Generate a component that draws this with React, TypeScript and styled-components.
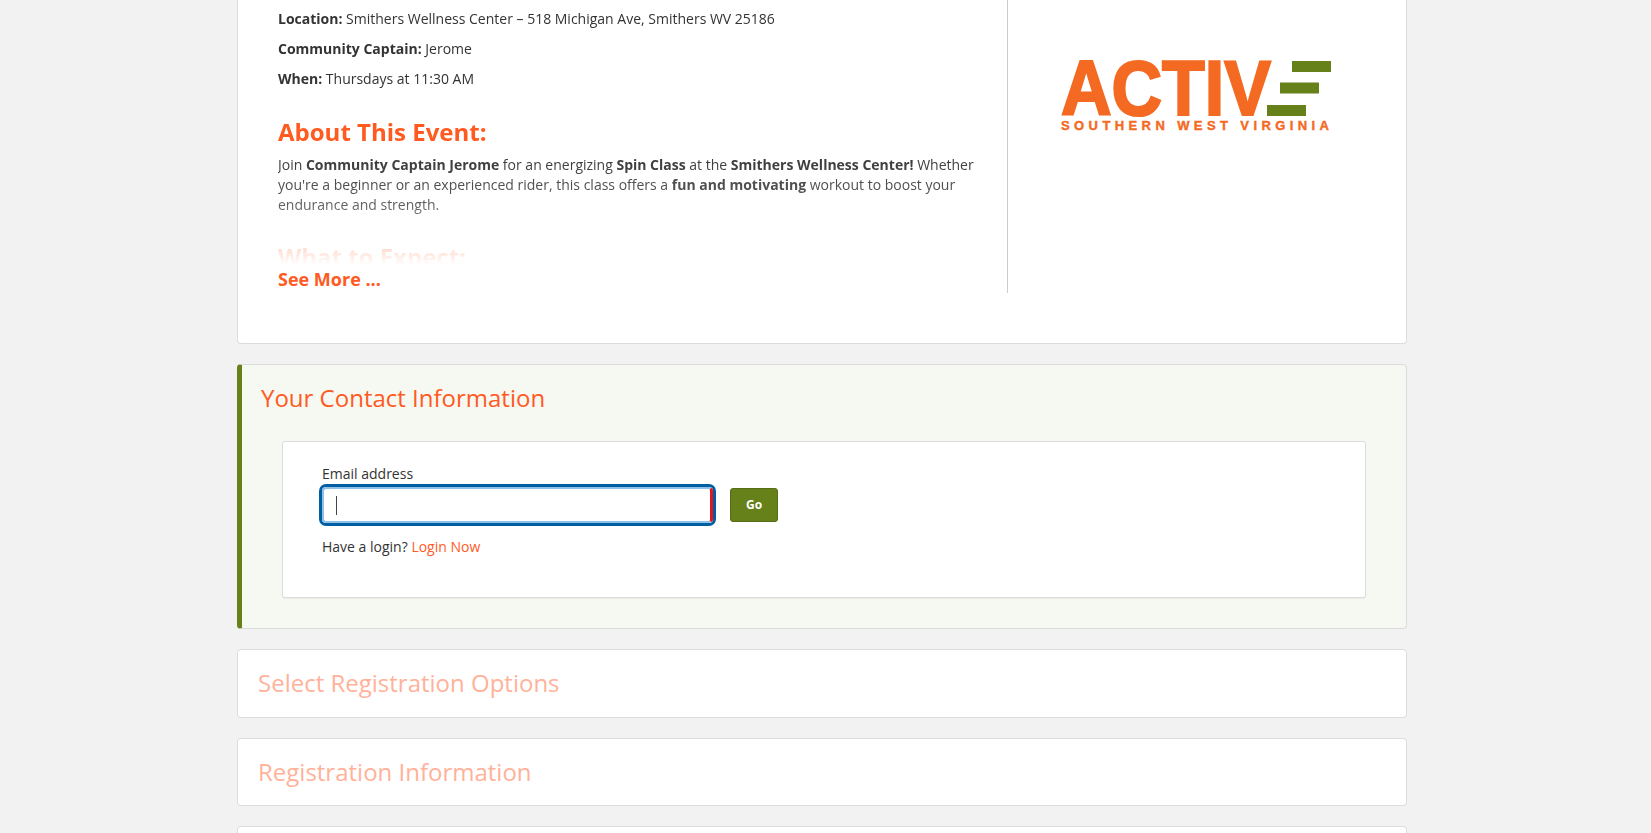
import React from "react";
import styled, { createGlobalStyle } from "styled-components";

const Global = createGlobalStyle`
  html, body { margin: 0; padding: 0; height: 100%; overflow: hidden; background: #f2f2f2; }
  body { font-family: "Open Sans", "Liberation Sans", sans-serif; font-size: 14px; line-height: 20px; color: #333; }
  * { box-sizing: border-box; }
`;

const Page = styled.div`
  width: 1170px;
  margin: 0 0 0 237px;
  display: flex;
  flex-direction: column;
  gap: 20px;
`;

const Card = styled.section`
  background: #fff;
  border: 1px solid #dcdcdc;
  border-radius: 4px;
`;

const EventCard = styled(Card)`
  border-top: 0;
  border-radius: 0 0 4px 4px;
  display: flex;
  padding: 0 0 49px 40px;
  height: 344px;
`;

const EventColumn = styled.div`
  width: 730px;
  height: 293px;
  padding-right: 20px;
  border-right: 1px solid #ccc;
`;

const EventText = styled.div`
  height: 267px;
  padding-top: 9px;
  overflow: hidden;
  -webkit-mask-image: linear-gradient(to bottom, #000 150px, rgba(0, 0, 0, 0.78) 205px, rgba(0, 0, 0, 0.24) 246px, transparent 265px);
  mask-image: linear-gradient(to bottom, #000 150px, rgba(0, 0, 0, 0.78) 205px, rgba(0, 0, 0, 0.24) 246px, transparent 265px);
`;

const Fact = styled.p`
  margin: 0 0 10px;
  color: #333;
  b { font-weight: 700; }
`;

const EventHeading = styled.h2<{ $top: number }>`
  margin: ${(p) => p.$top}px 0 9px;
  font-size: 24px;
  line-height: 28px;
  font-weight: 700;
  color: #ff5a1f;
`;

const Paragraph = styled.p`
  margin: 0;
  color: #333;
  b { font-weight: 700; }
`;

const SeeMore = styled.a`
  display: block;
  font-size: 18px;
  line-height: 24px;
  font-weight: 700;
  color: #ff5a1f;
`;

const LogoColumn = styled.div`
  flex: 1;
  padding: 40px 0 0 52px;
`;

const Logo = styled.svg`
  display: block;
`;

const ContactCard = styled(Card)`
  height: 265px;
  background: #f6f8f2;
  border-left: 5px solid #66801a;
  padding: 16px 40px 30px 19px;
`;

const SectionTitle = styled.h3<{ $muted?: boolean }>`
  margin: 0;
  font-size: 24px;
  line-height: 34px;
  font-weight: 400;
  color: ${(p) => (p.$muted ? "#ffb299" : "#ff5a1f")};
`;

const InnerCard = styled.div`
  height: 157px;
  margin: 26px 0 0 21px;
  background: #fff;
  border: 1px solid #dcdcdc;
  border-radius: 3px;
  box-shadow: 0 1px 1px rgba(0, 0, 0, 0.05);
  padding: 22px 39px;
`;

const Label = styled.label`
  display: block;
  color: #333;
  line-height: 20px;
`;

const FormRow = styled.div`
  display: flex;
  align-items: center;
  gap: 14px;
  margin-left: -3px;
`;

const InputWrap = styled.div`
  position: relative;
  width: 397px;
  height: 42px;
  border: 3px solid #005ea2;
  border-radius: 7px;
  background: #fff;
`;

const Input = styled.input`
  display: block;
  width: 100%;
  height: 100%;
  padding: 0 12px;
  border: 2px solid #8fc0e8;
  border-right: 3px solid #e8141c;
  border-radius: 4px;
  outline: none;
  background: #fff;
  font: inherit;
  caret-color: transparent;
`;

const Caret = styled.span`
  position: absolute;
  left: 14px;
  top: 9px;
  width: 1px;
  height: 19px;
  background: #444;
`;

const GoButton = styled.button`
  width: 48px;
  height: 34px;
  padding: 0;
  border: 1px solid #566c15;
  border-radius: 3px;
  background: #66801a;
  color: #fff;
  font: 700 12px/1 "Open Sans", sans-serif;
`;

const LoginLine = styled.p`
  margin: 11px 0 0;
  color: #333;
  a { color: #ff5a1f; }
`;

const CollapsedCard = styled(Card)<{ $h: number }>`
  height: ${(p) => p.$h}px;
  padding: 16px 20px;
`;

export default function App() {
  return (
    <>
      <Global />
      <Page>
        <EventCard>
          <EventColumn>
            <EventText>
              <Fact><b>Location:</b> Smithers Wellness Center – 518 Michigan Ave, Smithers WV 25186</Fact>
              <Fact><b>Community Captain:</b> Jerome</Fact>
              <Fact><b>When:</b> Thursdays at 11:30 AM</Fact>
              <EventHeading $top={29}>About This Event:</EventHeading>
              <Paragraph>
                Join <b>Community Captain Jerome</b> for an energizing <b>Spin Class</b> at the <b>Smithers Wellness Center!</b> Whether you're a beginner or an experienced rider, this class offers a <b>fun and motivating</b> workout to boost your endurance and strength.
              </Paragraph>
              <EventHeading $top={28}>What to Expect:</EventHeading>
            </EventText>
            <SeeMore>See More ...</SeeMore>
          </EventColumn>
          <LogoColumn>
            <Logo width="274" height="100" viewBox="0 0 274 100" aria-label="Active Southern West Virginia">
              <text x="1" y="75" fontFamily="'Liberation Sans', sans-serif" fontWeight="700" fontSize="77" fill="#f46a22" stroke="#f46a22" strokeWidth="2.2" textLength="210" lengthAdjust="spacingAndGlyphs">ACTIV</text>
              <rect x="232" y="21" width="39" height="11" fill="#66801a" />
              <rect x="220" y="42.5" width="39" height="11" fill="#66801a" />
              <rect x="207" y="65" width="39" height="11" fill="#66801a" />
              <text x="1" y="90" fontFamily="'Liberation Sans', sans-serif" fontWeight="700" fontSize="13" fill="#f46a22" stroke="#f46a22" strokeWidth="0.4" textLength="268" lengthAdjust="spacing">SOUTHERN WEST VIRGINIA</text>
            </Logo>
          </LogoColumn>
        </EventCard>

        <ContactCard>
          <SectionTitle>Your Contact Information</SectionTitle>
          <InnerCard>
            <Label htmlFor="email">Email address</Label>
            <FormRow>
              <InputWrap>
                <Input id="email" type="email" />
                <Caret />
              </InputWrap>
              <GoButton>Go</GoButton>
            </FormRow>
            <LoginLine>Have a login? <a>Login Now</a></LoginLine>
          </InnerCard>
        </ContactCard>

        <CollapsedCard $h={69}>
          <SectionTitle $muted>Select Registration Options</SectionTitle>
        </CollapsedCard>
        <CollapsedCard $h={68}>
          <SectionTitle $muted>Registration Information</SectionTitle>
        </CollapsedCard>
        <CollapsedCard $h={68} />
      </Page>
    </>
  );
}
